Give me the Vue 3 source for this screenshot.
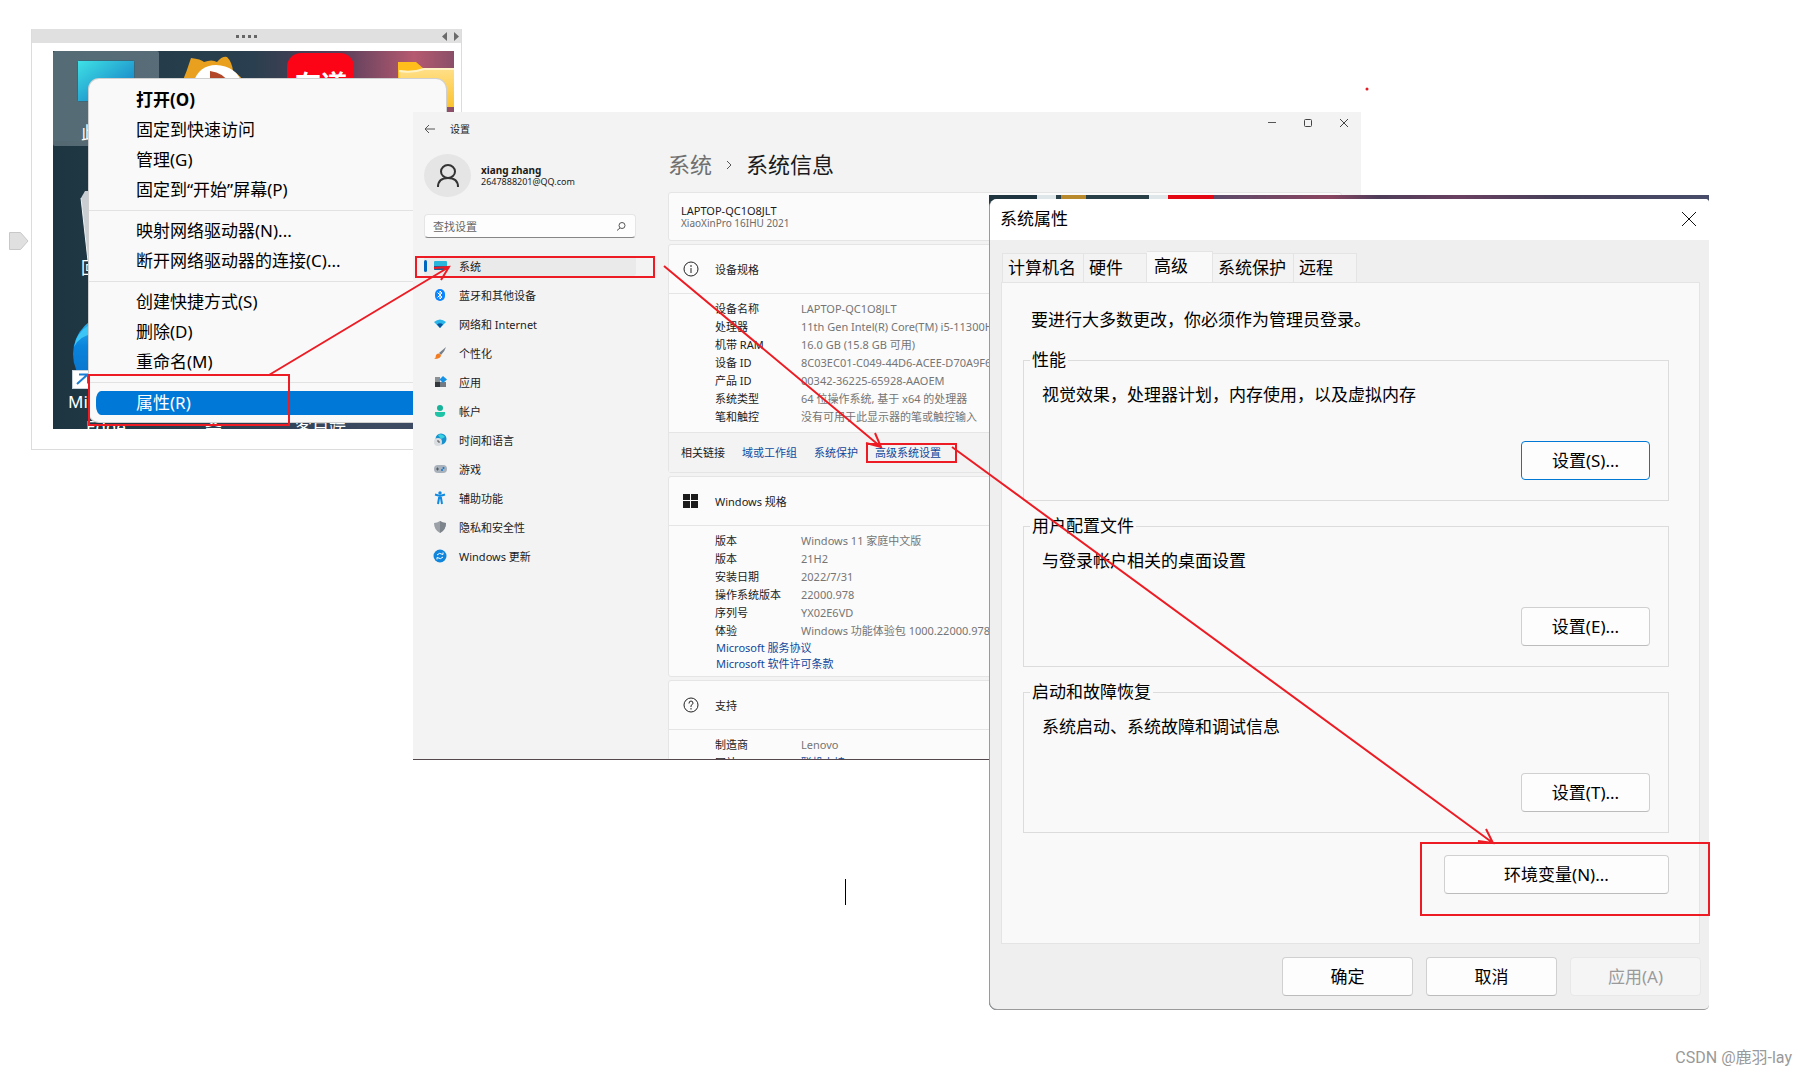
<script setup>
const menuGroups = [
  ['打开(O)', '固定到快速访问', '管理(G)', '固定到“开始”屏幕(P)'],
  ['映射网络驱动器(N)...', '断开网络驱动器的连接(C)...'],
  ['创建快捷方式(S)', '删除(D)', '重命名(M)'],
  ['属性(R)'],
]

const navItems = [
  { icon: 'system', text: '系统' },
  { icon: 'bluetooth', text: '蓝牙和其他设备' },
  { icon: 'network', text: '网络和 Internet' },
  { icon: 'brush', text: '个性化' },
  { icon: 'apps', text: '应用' },
  { icon: 'account', text: '帐户' },
  { icon: 'time', text: '时间和语言' },
  { icon: 'game', text: '游戏' },
  { icon: 'access', text: '辅助功能' },
  { icon: 'shield', text: '隐私和安全性' },
  { icon: 'update', text: 'Windows 更新' },
]

const deviceRows = [
  ['设备名称', 'LAPTOP-QC1O8JLT'],
  ['处理器', '11th Gen Intel(R) Core(TM) i5-11300H @ 3.10GHz'],
  ['机带 RAM', '16.0 GB (15.8 GB 可用)'],
  ['设备 ID', '8C03EC01-C049-44D6-ACEE-D70A9F61'],
  ['产品 ID', '00342-36225-65928-AAOEM'],
  ['系统类型', '64 位操作系统, 基于 x64 的处理器'],
  ['笔和触控', '没有可用于此显示器的笔或触控输入'],
]

const windowsRows = [
  ['版本', 'Windows 11 家庭中文版'],
  ['版本', '21H2'],
  ['安装日期', '2022/7/31'],
  ['操作系统版本', '22000.978'],
  ['序列号', 'YX02E6VD'],
  ['体验', 'Windows 功能体验包 1000.22000.978.0'],
]

const tabs = ['计算机名', '硬件', '高级', '系统保护', '远程']

const groups = [
  { title: '性能', text: '视觉效果，处理器计划，内存使用，以及虚拟内存', button: '设置(S)...' },
  { title: '用户配置文件', text: '与登录帐户相关的桌面设置', button: '设置(E)...' },
  { title: '启动和故障恢复', text: '系统启动、系统故障和调试信息', button: '设置(T)...' },
]
</script>

<template>
  <main class="canvas">
    <svg class="handle" width="20" height="18" viewBox="0 0 20 18" aria-hidden="true">
      <path d="M.5 .5H11.500L19 9L11.500 17.500H.5Z" fill="#e0e0e0" stroke="#c8c8c8" />
    </svg>

    <section class="embed">
      <div class="embed-bar">
        <svg width="22" height="4" viewBox="0 0 22 4" aria-hidden="true">
          <path d="M0 1h3v3H0zM6 1h3v3H6zM12 1h3v3h-3zM18 1h3v3h-3z" fill="#666" />
        </svg>
        <svg class="embed-arrows" width="18" height="10" viewBox="0 0 18 10" aria-hidden="true">
          <path d="M5 0v9L0 4.500zM12 0v9L17 4.500z" fill="#6b6b6b" />
        </svg>
      </div>
      <div class="desktop">
        <svg class="wallpaper" viewBox="0 0 401 378" preserveAspectRatio="xMinYMin slice" aria-hidden="true">
          <defs>
            <linearGradient id="wall" x1="0" y1="0" x2="1" y2="0">
              <stop offset="0" stop-color="#1f3a45" />
              <stop offset=".5" stop-color="#2a3f4f" />
              <stop offset=".72" stop-color="#5a3f5b" />
              <stop offset=".9" stop-color="#b65a70" />
              <stop offset="1" stop-color="#8a4e68" />
            </linearGradient>
            <linearGradient id="wallBottom" x1="0" y1="0" x2="1" y2="0">
              <stop offset="0" stop-color="#1c3540" />
              <stop offset="1" stop-color="#3c4a62" />
            </linearGradient>
            <linearGradient id="screen" x1="0" y1="0" x2="1" y2="1">
              <stop offset="0" stop-color="#3fe3e6" />
              <stop offset="1" stop-color="#0f6fc0" />
            </linearGradient>
            <linearGradient id="folder" x1="0" y1="0" x2="0" y2="1">
              <stop offset="0" stop-color="#ffe08a" />
              <stop offset="1" stop-color="#fcc32f" />
            </linearGradient>
            <linearGradient id="edge" x1="0" y1="0" x2="0" y2="1">
              <stop offset="0" stop-color="#35c1f1" />
              <stop offset=".4" stop-color="#0a84dc" />
              <stop offset="1" stop-color="#0a6cc4" />
            </linearGradient>
          </defs>
          <rect width="401" height="378" fill="url(#wall)" />
          <rect y="90" width="330" height="288" fill="url(#wallBottom)" />
          <rect x="330" y="300" width="71" height="78" fill="#3c4a62" />
          <rect width="106" height="95" rx="2" fill="#9fb0b8" fill-opacity=".42" />
          <rect x="24.500" y="9.500" width="57" height="41" rx="1" fill="url(#screen)" stroke="#3d6878" />
          <path d="M128 34Q134 20 138 7Q148 8 151 11Q159 8 164 11Q169 5 174 6Q179 11 180 20Q188 24 192 34Z" fill="#e9a01f" />
          <path d="M140 32Q146 14 163 14Q183 15 189 32Z" fill="#fff" />
          <path d="M157 20Q171 22 176 32H157Z" fill="#b2472a" />
          <rect x="234" y="2" width="67" height="60" rx="14" fill="#fc0316" />
          <text x="242" y="43" fill="#fff" font-size="26" font-weight="700">有道</text>
          <path d="M345 11h18l8 7h30v38h-56z" fill="#ffbe1c" />
          <path d="M346 19q18 3 25-2h30v39h-55z" fill="url(#folder)" />
          <path d="M346 20q14 2 25-2h30" fill="none" stroke="#fff3c6" stroke-width="2" />
          <text x="28" y="88" fill="#fff" font-size="17">此</text>
          <path d="M28 147l4-7h30v70H35z" fill="#c9ced2" />
          <path d="M35 210l-7-63" stroke="#eef1f3" fill="none" />
          <text x="28" y="223" fill="#fff" font-size="17">回</text>
          <circle cx="60" cy="303" r="40" fill="url(#edge)" />
          <path d="M21 296Q26 285 40 283L36 274Q23 282 21 296Z" fill="#3cc6f5" />
          <rect x="19.500" y="319.500" width="20" height="18" fill="#fff" stroke="#c6d3dc" />
          <path d="M24 333L34 324M26 323.500h9v9" fill="none" stroke="#1a7fd4" stroke-width="2" />
          <text x="15" y="357" fill="#fff" font-size="17">Mi</text>
          <text x="33" y="382" fill="#fff" font-size="17">Edge</text>
          <text x="152" y="383" fill="#fff" font-size="17">斋</text>
          <text x="242" y="383" fill="#fff" font-size="17">客户端</text>
        </svg>
        <nav class="menu" aria-label="此电脑">
          <div v-for="(group, g) in menuGroups" :key="g" class="menu-group">
            <button
              v-for="(item, i) in group"
              :key="item"
              type="button"
              :class="{ strong: g === 0 && i === 0, active: g === 3 }"
            >{{ item }}</button>
          </div>
        </nav>
      </div>
    </section>

    <section class="settings">
      <header class="settings-bar">
        <button type="button" class="plain" aria-label="返回">
          <svg width="12" height="10" viewBox="0 0 12 10"><path d="M11 5H1M5 1L1 5L5 9" fill="none" stroke="#555" /></svg>
        </button>
        <span class="settings-name">设置</span>
        <div class="controls">
          <button type="button" class="plain" aria-label="最小化">
            <svg width="10" height="10" viewBox="0 0 10 10"><path d="M1 4.500h8" stroke="#555" /></svg>
          </button>
          <button type="button" class="plain" aria-label="最大化">
            <svg width="10" height="10" viewBox="0 0 10 10"><rect x="1.500" y="1.500" width="7" height="7" rx="1" fill="none" stroke="#444" /></svg>
          </button>
          <button type="button" class="plain" aria-label="关闭设置">
            <svg width="10" height="10" viewBox="0 0 10 10"><path d="M1 1l8 8M9 1l-8 8" stroke="#444" /></svg>
          </button>
        </div>
      </header>

      <div class="settings-body">
        <aside class="side">
          <div class="user">
            <div class="avatar">
              <svg width="24" height="24" viewBox="0 0 24 24"><ellipse cx="12" cy="7.500" rx="7" ry="6.500" fill="none" stroke="#333" stroke-width="2" /><path d="M2 23Q2 14 12 14T22 23" fill="none" stroke="#333" stroke-width="2" /></svg>
            </div>
            <div>
              <div class="user-name">xiang zhang</div>
              <div class="user-mail">2647888201@QQ.com</div>
            </div>
          </div>
          <div class="search">
            <input type="text" placeholder="查找设置" aria-label="查找设置" />
            <svg width="10" height="9" viewBox="0 0 10 9" aria-hidden="true"><circle cx="6" cy="3.500" r="3" fill="none" stroke="#555" /><path d="M4 6L1 8.500" stroke="#555" /></svg>
          </div>
          <nav class="side-nav" aria-label="设置分类">
            <a v-for="(item, i) in navItems" :key="item.text" href="#" :class="{ current: i === 0 }">
              <svg width="14" height="14" viewBox="0 0 14 14" aria-hidden="true">
                <template v-if="item.icon === 'system'">
                  <rect x="1" y="2" width="13" height="9" rx="1" fill="#29b6dc" />
                  <path d="M1 7h13v3q0 1-1 1H2q-1 0-1-1z" fill="#1a5f95" />
                </template>
                <template v-else-if="item.icon === 'bluetooth'">
                  <rect x="2" y="1" width="10" height="12" rx="5" fill="#0a84ff" />
                  <path d="M4.500 4.500L9 9L7 11V3L9 5L4.500 9.500" fill="none" stroke="#fff" />
                </template>
                <template v-else-if="item.icon === 'network'">
                  <path d="M1 5Q7 0 13 5L7 11Z" fill="#27b5ea" />
                  <path d="M4 7.500Q7 5 10 7.500L7 11Z" fill="#0a5299" />
                </template>
                <template v-else-if="item.icon === 'brush'">
                  <path d="M13 1L6 7L8 9Q12 5 13 1Z" fill="#77808a" />
                  <path d="M1 13Q3 12 3 9Q5 6 8 9Q8 13 1 13Z" fill="#f47c20" />
                </template>
                <template v-else-if="item.icon === 'apps'">
                  <path d="M2 2h5v5H2z" fill="#8b9095" />
                  <path d="M2 7h5v5H2z" fill="#33383d" />
                  <path d="M7 7h6v5H7z" fill="#747b82" />
                  <path d="M10 1l4 3.500L10 8L6.500 4.500z" fill="#1492e8" />
                </template>
                <template v-else-if="item.icon === 'account'">
                  <circle cx="7" cy="4" r="3" fill="#16b39a" />
                  <path d="M2 8h10q1 5-5 5t-5-5z" fill="#1fc3a6" />
                </template>
                <template v-else-if="item.icon === 'time'">
                  <circle cx="8" cy="6" r="5.500" fill="#1792cf" />
                  <path d="M5 2q4-2 7 2l-4 2z" fill="#3ad0e0" />
                  <circle cx="5" cy="9" r="4" fill="#d9dde1" />
                  <path d="M5 7v2h2" fill="none" stroke="#555" />
                </template>
                <template v-else-if="item.icon === 'game'">
                  <rect x="1" y="3" width="13" height="8" rx="4" fill="#a9b1ba" />
                  <path d="M3 7h3M4.500 5.500v3" stroke="#535b64" />
                  <circle cx="10.500" cy="6" r="1" fill="#0a78d4" />
                  <circle cx="9" cy="8" r="1" fill="#0a78d4" />
                </template>
                <template v-else-if="item.icon === 'access'">
                  <circle cx="7" cy="2" r="1.700" fill="#0f8ae0" />
                  <path d="M2 3.500L7 5L12 3.500M7 5v3M5 13L6 7h2l1 6" fill="none" stroke="#0f8ae0" stroke-width="2" />
                </template>
                <template v-else-if="item.icon === 'shield'">
                  <path d="M7 1Q10 3 13 3Q13 10 7 13Q1 10 1 3Q4 3 7 1Z" fill="#9aa0a6" />
                  <path d="M7 1Q10 3 13 3Q13 10 7 13Z" fill="#7d848b" />
                </template>
                <template v-else>
                  <circle cx="7" cy="7" r="6.500" fill="#0f86dc" />
                  <path d="M4 6Q6 3 10 5.500V3.500M10 8Q8 11 4 8.500V10.500" fill="none" stroke="#fff" />
                </template>
              </svg>
              {{ item.text }}
            </a>
          </nav>
        </aside>

        <div class="content">
          <h1>
            <span class="crumb">系统</span>
            <svg width="6" height="10" viewBox="0 0 6 10" aria-hidden="true"><path d="M1 1L5 5L1 9" fill="none" stroke="#555" /></svg>
            <span>系统信息</span>
          </h1>

          <section class="card intro">
            <div>LAPTOP-QC1O8JLT</div>
            <div class="model">XiaoXinPro 16IHU 2021</div>
          </section>

          <section class="card">
            <h2>
              <svg width="16" height="16" viewBox="0 0 16 16" aria-hidden="true"><circle cx="8" cy="8" r="7" fill="none" stroke="#222" /><path d="M8 7v5M8 4v2" stroke="#222" /></svg>
              设备规格
            </h2>
            <table>
              <tbody>
                <tr v-for="row in deviceRows" :key="row[0]"><th scope="row">{{ row[0] }}</th><td>{{ row[1] }}</td></tr>
              </tbody>
            </table>
            <div class="related">
              <span>相关链接</span>
              <a href="#">域或工作组</a>
              <a href="#">系统保护</a>
              <a href="#">高级系统设置</a>
            </div>
          </section>

          <section class="card">
            <h2>
              <svg width="16" height="16" viewBox="0 0 16 16" aria-hidden="true"><path d="M0 1h7v6H0zM8 1h7v6H8zM0 8h7v7H0zM8 8h7v7H8z" fill="#1b1b1b" /></svg>
              Windows 规格
            </h2>
            <table>
              <tbody>
                <tr v-for="(row, i) in windowsRows" :key="i"><th scope="row">{{ row[0] }}</th><td>{{ row[1] }}</td></tr>
              </tbody>
            </table>
            <div class="terms">
              <a href="#">Microsoft 服务协议</a>
              <a href="#">Microsoft 软件许可条款</a>
            </div>
          </section>

          <section class="card">
            <h2>
              <svg width="16" height="16" viewBox="0 0 16 16" aria-hidden="true"><circle cx="8" cy="8" r="7" fill="none" stroke="#222" /><path d="M6 6.500Q6 4 8 4T10 6.200Q10 7.200 8 8.500V10M8 11v1.500" fill="none" stroke="#222" /></svg>
              支持
            </h2>
            <table>
              <tbody>
                <tr><th scope="row">制造商</th><td>Lenovo</td></tr>
                <tr><th scope="row">网站</th><td><a href="#">联机支持</a></td></tr>
              </tbody>
            </table>
          </section>
        </div>
      </div>
    </section>

    <section class="backdrop">
      <div class="dialog" role="dialog" aria-label="系统属性">
        <header class="dialog-bar">
          <span>系统属性</span>
          <button type="button" class="plain" aria-label="关闭">
            <svg width="16" height="16" viewBox="0 0 16 16"><path d="M1 1l14 14M15 1L1 15" stroke="#111" /></svg>
          </button>
        </header>
        <div class="tabs" role="tablist">
          <button v-for="tab in tabs" :key="tab" type="button" role="tab" :aria-selected="tab === '高级'">{{ tab }}</button>
        </div>
        <div class="panel">
          <p>要进行大多数更改，你必须作为管理员登录。</p>
          <fieldset v-for="(group, i) in groups" :key="group.title">
            <legend>{{ group.title }}</legend>
            <div class="group-text">{{ group.text }}</div>
            <button type="button" class="push setup" :class="{ focus: i === 0 }">{{ group.button }}</button>
          </fieldset>
          <button type="button" class="push env">环境变量(N)...</button>
        </div>
        <footer class="dialog-foot">
          <button type="button" class="push">确定</button>
          <button type="button" class="push">取消</button>
          <button type="button" class="push" disabled>应用(A)</button>
        </footer>
      </div>
    </section>

    <svg class="marks" width="1807" height="1075" viewBox="0 0 1807 1075" aria-hidden="true">
      <g fill="none" stroke="#ed1c24" stroke-width="2">
        <rect x="89" y="375" width="200" height="50" />
        <rect x="416" y="257" width="238" height="20" />
        <rect x="867" y="444" width="89" height="18" />
        <rect x="1421" y="843" width="288" height="72" />
        <path d="M269 375L449 267M434 268L449 267L441 280" />
        <path d="M664 266L881 447M866 443L881 447L875 433" />
        <path d="M952 447L1493 843M1478 841L1493 843L1486 829" />
      </g>
      <circle cx="1367" cy="89" r="1.500" fill="#e31b23" />
      <path d="M845.500 879v26" stroke="#000" />
    </svg>

    <footer class="watermark">CSDN @鹿羽-lay</footer>
  </main>
</template>

<style>
body {
  margin: 0;
  background: #fff;
}
</style>

<style scoped>
.canvas {
  position: relative;
  display: flex;
  flex-direction: column;
  justify-content: flex-end;
  min-height: 100vh;
  overflow: hidden;
  background: #fff;
  color: #000;
  font-family: "Noto Sans", "Noto Sans CJK SC", sans-serif;
  font-size: 17px;
}

.canvas * {
  box-sizing: border-box;
}

.canvas svg {
  flex: none;
}

button,
input {
  font: inherit;
  color: inherit;
}

a {
  color: #10489c;
  text-decoration: none;
}

.plain {
  display: flex;
  align-items: center;
  justify-content: center;
  padding: 0;
  border: 0;
  background: none;
}

.handle {
  position: absolute;
  left: 9px;
  top: 232px;
}

/* Embedded desktop picture */
.embed {
  position: absolute;
  left: 31px;
  top: 29px;
  width: 431px;
  padding-bottom: 20px;
  border: 1px solid #dcdcdc;
  border-top: 0;
}

.embed-bar {
  display: flex;
  align-items: center;
  justify-content: center;
  height: 14px;
  background: #e0e0e0;
}

.embed-arrows {
  position: absolute;
  right: 1px;
  top: 3px;
}

.desktop {
  position: relative;
  height: 378px;
  margin: 8px 7px 0 21px;
  padding: 28px 8px 0 36px;
  overflow: hidden;
}

.wallpaper {
  position: absolute;
  inset: 0;
  width: 100%;
  height: 100%;
}

.menu {
  position: relative;
  padding: 6px 0 4px;
  border-radius: 10px;
  background: #f9f9f9;
  box-shadow: 0 0 0 1px #d0d0d0;
}

.menu-group + .menu-group {
  padding-top: 5px;
  margin-top: 5px;
  border-top: 1px solid #e2e2e2;
}

.menu button {
  display: block;
  width: 100%;
  height: 30px;
  padding: 0 0 0 47px;
  border: 0;
  background: none;
  line-height: 30px;
  text-align: left;
}

.menu .strong {
  font-weight: 700;
}

.menu .active {
  border: solid #f9f9f9;
  border-width: 3px 4px 3px 7px;
  border-radius: 12px;
  padding-left: 40px;
  background: #0078d7;
  color: #fff;
  line-height: 24px;
}

/* Settings window */
.settings {
  position: absolute;
  left: 413px;
  top: 112px;
  width: 948px;
  height: 648px;
  overflow: hidden;
  border-bottom: 1px solid #54484c;
  background: #f3f3f3;
  color: #1b1b1b;
  font-size: 11px;
}

.settings-bar {
  display: flex;
  height: 34px;
  padding: 0 12px 0 11px;
}

.settings-bar > .plain {
  height: 34px;
}

.settings-name {
  margin-left: 14px;
  font-size: 10px;
  line-height: 34px;
}

.controls {
  display: flex;
  gap: 26px;
  height: 22px;
  margin-left: auto;
}

.settings-body {
  display: flex;
}

.side {
  width: 255px;
  padding: 8px 32px 0 11px;
}

.user {
  display: flex;
  align-items: center;
  gap: 10px;
}

.avatar {
  display: flex;
  align-items: center;
  justify-content: center;
  width: 47px;
  height: 43px;
  border-radius: 50%;
  background: #e5e5e5;
}

.user-name {
  font-size: 10px;
  font-weight: 700;
  line-height: 12px;
}

.user-mail {
  font-size: 9px;
  line-height: 12px;
}

.search {
  display: flex;
  align-items: center;
  height: 24px;
  margin-top: 17px;
  padding: 0 9px 0 8px;
  border: 1px solid #e5e5e5;
  border-bottom-color: #868686;
  border-radius: 4px;
  background: #fdfdfd;
}

.search input {
  flex: 1;
  min-width: 0;
  padding: 0;
  border: 0;
  outline: 0;
  background: none;
}

.search input::placeholder {
  color: #666;
  opacity: 1;
}

.side-nav {
  display: flex;
  flex-direction: column;
  gap: 9px;
  margin-top: 18px;
}

.side-nav a {
  display: flex;
  align-items: center;
  gap: 12px;
  height: 20px;
  padding-left: 9px;
  border-radius: 3px;
  color: #1b1b1b;
}

.side-nav .current {
  padding-left: 6px;
  background: #eaeaea;
}

.side-nav .current::before {
  width: 3px;
  height: 12px;
  margin-right: -12px;
  margin-left: -6px;
  border-radius: 2px;
  background: #0067c0;
  content: "";
}

.side-nav .current svg {
  margin-left: 6px;
}

.content {
  flex: 1;
  padding-right: 19px;
}

h1 {
  display: flex;
  align-items: center;
  gap: 14px;
  margin: 5px 0 14px;
  font-size: 22px;
  font-weight: 400;
  line-height: 27px;
}

.crumb {
  color: #707070;
}

.card {
  margin-bottom: 3px;
  border: 1px solid #e5e5e5;
  border-radius: 3px;
  background: #fbfbfb;
}

.intro {
  height: 49px;
  padding: 12px 12px 0;
  line-height: 12px;
}

.model {
  color: #6b6b6b;
  font-size: 10px;
}

h2 {
  display: flex;
  align-items: center;
  gap: 16px;
  height: 49px;
  margin: 0;
  padding-left: 14px;
  border-bottom: 1px solid #e5e5e5;
  font-size: 11px;
  font-weight: 400;
}

table {
  margin: 6px 0 6px 46px;
  border-collapse: collapse;
  line-height: 18px;
  white-space: nowrap;
}

th,
td {
  padding: 0;
  text-align: left;
}

th {
  width: 86px;
  font-weight: 400;
}

td {
  color: #757575;
}

.related {
  display: flex;
  padding: 0 12px;
  border-top: 1px solid #e5e5e5;
  background: #f3f3f3;
  line-height: 39px;
}

.related a {
  margin-left: 17px;
}

.terms {
  display: flex;
  flex-direction: column;
  align-items: flex-start;
  margin-top: -6px;
  padding: 0 47px 4px;
  line-height: 16px;
}

/* System properties dialog */
.backdrop {
  position: absolute;
  left: 989px;
  top: 195px;
  width: 720px;
  padding-top: 4px;
  border-radius: 0 0 8px 8px;
  background: linear-gradient(90deg, #1f3640 0 48px, #dfe6ea 48px 67px, #2a4049 67px 72px, #b98a2c 72px 97px, #2a4049 97px 160px, #dfe6ea 160px 179px, #e30613 179px 225px, #5c4a6a 225px, #8a4560 340px, #4e3d5a 390px, #6a4060 470px, #46405a 570px, #484d6a 720px);
}

.dialog {
  overflow: hidden;
  border: solid #9a9a9a;
  border-width: 0 0 1px 1px;
  border-radius: 8px 4px 5px 8px;
  background: #efefef;
  line-height: 24px;
}

.dialog-bar {
  display: flex;
  align-items: center;
  justify-content: space-between;
  height: 41px;
  padding: 0 12px 2px 10px;
  background: #fff;
}

.tabs {
  display: flex;
  align-items: flex-end;
  height: 42px;
  padding-left: 12px;
}

.tabs button {
  height: 29px;
  padding: 0 18px 0 5px;
  border: 1px solid #e4e4e4;
  border-left-width: 0;
  border-bottom: 0;
  background: #f3f3f3;
}

.tabs button:first-child,
.tabs button:nth-child(4) {
  padding-right: 7px;
}

.tabs button:first-child {
  border-left-width: 1px;
}

.tabs button:nth-child(2),
.tabs button:nth-child(5) {
  padding-right: 23px;
}

.tabs button[aria-selected="true"] {
  height: 31px;
  padding: 0 24px 2px 7px;
  background: #f9f9f9;
}

.panel {
  display: flex;
  flex-direction: column;
  margin: 0 9px 0 11px;
  padding: 25px 30px 49px 21px;
  border: 1px solid #e4e4e4;
  background: #f9f9f9;
}

.panel p {
  margin: 0 8px 16px;
}

fieldset {
  display: flex;
  flex-direction: column;
  min-width: 0;
  margin: 0 0 13px;
  padding: 0 18px 20px;
  border: 1px solid #dcdcdc;
}

fieldset:last-of-type {
  margin-bottom: 22px;
}

legend {
  margin-left: -12px;
  padding: 0 2px;
}

.group-text {
  margin-top: 11px;
}

.push {
  width: 131px;
  height: 39px;
  padding: 0;
  border: 1px solid #d0d0d0;
  border-bottom-color: #bcbcbc;
  border-radius: 4px;
  background: #fdfdfd;
}

.push:disabled {
  border-color: #e8e8e8;
  background: #f5f5f5;
  color: #9a9a9a;
}

.setup {
  align-self: flex-end;
  width: 129px;
  margin-top: 34px;
}

.focus {
  border-color: #0078d4;
}

.env {
  align-self: flex-end;
  width: 225px;
}

.dialog-foot {
  display: flex;
  justify-content: flex-end;
  gap: 13px;
  padding: 13px 8px;
}

/* Red markup above the windows */
.marks {
  position: absolute;
  left: 0;
  top: 0;
  pointer-events: none;
}

.watermark {
  padding: 0 15px 5px;
  color: #999;
  font-family: Roboto, "Noto Sans CJK SC", sans-serif;
  font-size: 16px;
  line-height: 24px;
  text-align: right;
}
</style>
